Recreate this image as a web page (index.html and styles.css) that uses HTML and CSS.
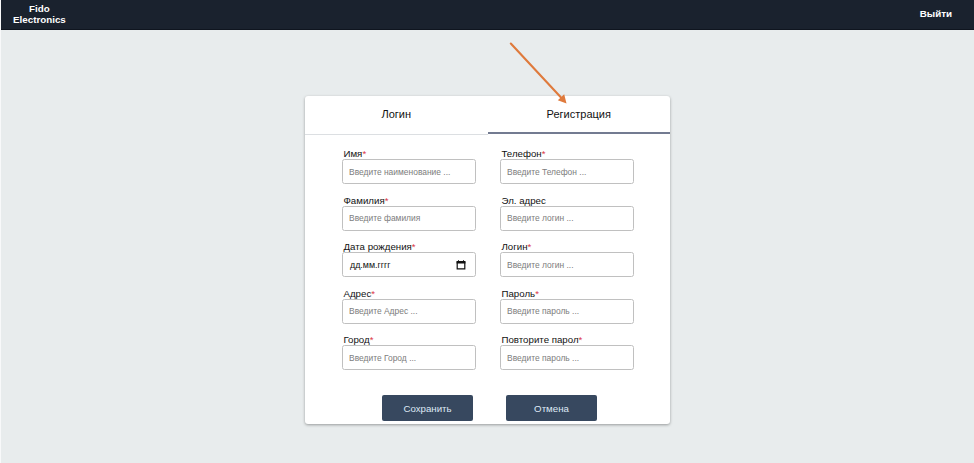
FILE: index.html
```html
<!DOCTYPE html>
<html lang="ru">
<head>
<meta charset="utf-8">
<title>Fido Electronics</title>
<link rel="stylesheet" href="styles.css">
</head>
<body>
<header class="topbar">
  <a class="brand">Fido<br>Electronics</a>
  <a class="logout">Выйти</a>
</header>
<main class="page">
  <section class="card">
    <nav class="tabs">
      <a class="tab">Логин</a>
      <a class="tab active">Регистрация</a>
    </nav>
    <form class="form">
      <label class="field"><span class="label">Имя<i>*</i></span><input class="control" placeholder="Введите наименование ..."></label>
      <label class="field"><span class="label">Телефон<i>*</i></span><input class="control" placeholder="Введите Телефон ..."></label>
      <label class="field"><span class="label">Фамилия<i>*</i></span><input class="control" placeholder="Введите фамилия"></label>
      <label class="field"><span class="label">Эл. адрес</span><input class="control" placeholder="Введите логин ..."></label>
      <div class="field"><span class="label">Дата рождения<i>*</i></span>
        <div class="control date"><span>дд.мм.гггг</span>
          <svg width="10" height="10" viewBox="0 0 10 10"><path d="M1.2 2h7.6v6.8H1.2z" fill="none" stroke="#111" stroke-width="1.2"/><path d="M.6 1h8.8v2.6H.6zM2 .3h1v1H2zM7 .3h1v1H7z" fill="#111"/></svg>
        </div>
      </div>
      <label class="field"><span class="label">Логин<i>*</i></span><input class="control" placeholder="Введите логин ..."></label>
      <label class="field"><span class="label">Адрес<i>*</i></span><input class="control" placeholder="Введите Адрес ..."></label>
      <label class="field"><span class="label">Пароль<i>*</i></span><input class="control" placeholder="Введите пароль ..."></label>
      <label class="field"><span class="label">Город<i>*</i></span><input class="control" placeholder="Введите Город ..."></label>
      <label class="field"><span class="label">Повторите парол<i>*</i></span><input class="control" placeholder="Введите пароль ..."></label>
    </form>
    <div class="actions">
      <button class="btn" type="button">Сохранить</button>
      <button class="btn" type="button">Отмена</button>
    </div>
  </section>
</main>
<svg class="arrow" width="60" height="64" viewBox="0 0 60 64"><path d="M2.8 2.5L53.5 57" stroke="#df7a3c" stroke-width="2.1" stroke-linecap="round"/><path d="M58.5 62.5L49.8 59.2L56.2 53.2z" fill="#df7a3c"/></svg>
</body>
</html>
```
FILE: styles.css
```css
* { box-sizing: border-box; }
body {
  margin: 0;
  height: 463px;
  overflow: hidden;
  background: #e8eced;
  border-left: 1px solid #f8f9fa;
  font-family: "Liberation Sans", Arial, sans-serif;
  color: #111;
}
.topbar {
  display: flex;
  justify-content: space-between;
  align-items: center;
  height: 30px;
  padding: 0 22px 2px 12px;
  background: #1a222e;
  border-bottom: 1px solid #0f151f;
  color: #fff;
  font-weight: bold;
}
.brand { font-size: 9.8px; line-height: 11px; text-align: center; }
.logout { font-size: 9.8px; }
.page { padding: 66px 0 0 304px; }
.card {
  width: 365px;
  height: 328px;
  background: #fff;
  border-radius: 3px;
  box-shadow: 0 1px 3px rgba(0, 0, 0, .35);
}
.tabs { display: flex; height: 38.5px; }
.tab {
  flex: 1;
  padding-top: 12px;
  border-bottom: 1px solid #dcdfe2;
  font-size: 11px;
  line-height: 13px;
  text-align: center;
}
.tab.active { height: 38px; border-bottom: 2px solid #737b91; }
.form {
  display: grid;
  grid-template-columns: 134px 134px;
  grid-auto-rows: 46.6px;
  column-gap: 24px;
  padding: 13.5px 0 0 37px;
}
.field { display: block; }
.label {
  display: block;
  height: 11px;
  padding-left: 1.5px;
  font-size: 9.7px;
  line-height: 12px;
  white-space: nowrap;
}
.label i { color: #dc3545; font-style: normal; }
.control {
  display: block;
  width: 134px;
  height: 25px;
  padding: 0 6px;
  border: 1px solid #c0c0c0;
  border-radius: 2.5px;
  background: #fff;
  font: 8.45px "Liberation Sans", Arial, sans-serif;
  color: #111;
}
.control::placeholder { color: #7d7d7d; opacity: 1; }
.date {
  display: flex;
  align-items: center;
  justify-content: space-between;
  padding: 0 9px 0 7px;
  font-size: 8.9px;
}
.actions { display: flex; gap: 33px; padding: 14px 0 0 77px; }
.btn {
  width: 91px;
  height: 26px;
  padding: 1px 0 0;
  border: 0;
  border-radius: 2px;
  background: #37485f;
  color: #dfe8f5;
  font: 9.7px "Liberation Sans", Arial, sans-serif;
}
.arrow { position: absolute; left: 508px; top: 41px; }
```
